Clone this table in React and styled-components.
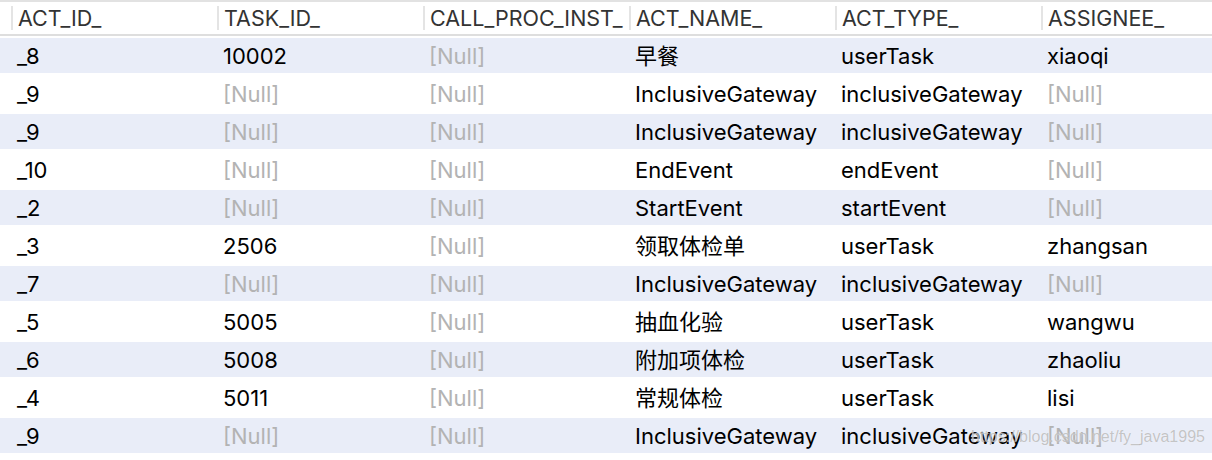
import React from "react";
import styled, { createGlobalStyle } from "styled-components";

const GlobalStyle = createGlobalStyle`
  html, body { margin: 0; padding: 0; background: #fff; }
  body { font-family: Inter, "Noto Sans CJK SC", sans-serif; }
`;

const Page = styled.div`
  position: relative;
  width: 1212px;
  height: 460px;
  overflow: hidden;
  background: #fff;
`;

const Header = styled.div`
  display: grid;
  grid-template-columns: repeat(6, 206px);
  padding-left: 11px;
  height: 36px;
  box-sizing: border-box;
  border-top: 2px solid #e2e2e2;
  border-bottom: 2px solid #dedede;
`;

const HeadCell = styled.div`
  display: flex;
  align-items: center;
  padding-left: 5px;
  border-left: 2px solid #e4e4e4;
  margin: 4px 0 5px;
  font-size: 21.5px;
  line-height: 24px;
  color: #333;
  white-space: nowrap;
`;

const Body = styled.div`
  display: flex;
  flex-direction: column;
`;

const Row = styled.div`
  display: grid;
  grid-template-columns: repeat(6, 206px);
  padding-left: 11px;
  height: 38px;
  box-sizing: border-box;
  border-top: 2px solid #fff;
  border-bottom: 1px solid #fff;
  background: ${(p) => (p.$striped ? "#e9edf8" : "#fff")};
`;

const Cell = styled.div`
  display: flex;
  align-items: center;
  padding-left: 6px;
  font-size: 22px;
  line-height: 24px;
  color: ${(p) => (p.$null ? "#b3b3b3" : "#000")};
  white-space: nowrap;
  overflow: hidden;
`;

const Watermark = styled.div`
  position: absolute;
  left: 971px;
  top: 428px;
  font-family: "Liberation Sans", Arial, sans-serif;
  font-size: 16px;
  color: rgba(150, 150, 150, 0.55);
  text-shadow: 0 0 1px rgba(255, 255, 255, 0.9);
  white-space: nowrap;
  pointer-events: none;
`;

const columns = ["ACT_ID_", "TASK_ID_", "CALL_PROC_INST_", "ACT_NAME_", "ACT_TYPE_", "ASSIGNEE_"];

const N = null;
const rows = [
  ["_8", "10002", N, "早餐", "userTask", "xiaoqi"],
  ["_9", N, N, "InclusiveGateway", "inclusiveGateway", N],
  ["_9", N, N, "InclusiveGateway", "inclusiveGateway", N],
  ["_10", N, N, "EndEvent", "endEvent", N],
  ["_2", N, N, "StartEvent", "startEvent", N],
  ["_3", "2506", N, "领取体检单", "userTask", "zhangsan"],
  ["_7", N, N, "InclusiveGateway", "inclusiveGateway", N],
  ["_5", "5005", N, "抽血化验", "userTask", "wangwu"],
  ["_6", "5008", N, "附加项体检", "userTask", "zhaoliu"],
  ["_4", "5011", N, "常规体检", "userTask", "lisi"],
  ["_9", N, N, "InclusiveGateway", "inclusiveGateway", N],
];

export default function App() {
  return (
    <Page>
      <GlobalStyle />
      <Header>
        {columns.map((c) => (
          <HeadCell key={c}>{c}</HeadCell>
        ))}
      </Header>
      <Body>
        {rows.map((r, i) => (
          <Row key={i} $striped={i % 2 === 0}>
            {r.map((v, j) => (
              <Cell key={j} $null={v === null}>
                {v === null ? "[Null]" : v}
              </Cell>
            ))}
          </Row>
        ))}
      </Body>
      <Watermark>https://blog.csdn.net/fy_java1995</Watermark>
    </Page>
  );
}
